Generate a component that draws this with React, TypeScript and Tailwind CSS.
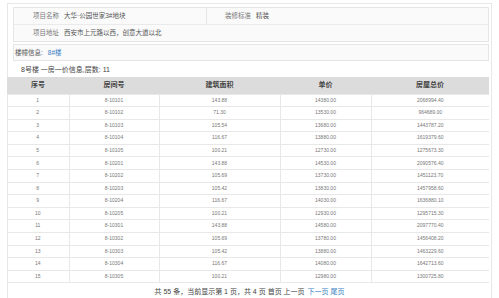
const rows: [string, string, string, string][] = [
  ["8-10101", "143.88", "14380.00", "2068994.40"],
  ["8-10102", "71.30", "13530.00", "964689.00"],
  ["8-10103", "105.54", "13680.00", "1443787.20"],
  ["8-10104", "116.67", "13880.00", "1619379.60"],
  ["8-10105", "100.21", "12730.00", "1275673.30"],
  ["8-10201", "143.88", "14530.00", "2090576.40"],
  ["8-10202", "105.69", "13730.00", "1451123.70"],
  ["8-10203", "105.42", "13830.00", "1457958.60"],
  ["8-10204", "116.67", "14030.00", "1636880.10"],
  ["8-10205", "100.21", "12930.00", "1295715.30"],
  ["8-10301", "143.88", "14580.00", "2097770.40"],
  ["8-10302", "105.69", "13780.00", "1456408.20"],
  ["8-10303", "105.42", "13880.00", "1463229.60"],
  ["8-10304", "116.67", "14080.00", "1642713.60"],
  ["8-10305", "100.21", "12980.00", "1300725.80"],
];

const font = { fontFamily: '"Liberation Sans", "Noto Sans CJK SC", sans-serif' };

export default function App() {
  return (
    <div className="w-[499px] h-[298px] bg-white overflow-hidden pt-[3px] text-[#555]" style={font}>
      <div className="ml-[7px] w-[485px] h-[300px] border border-[#e8e8e8] border-b-0">
        {/* project info */}
        <div className="mt-[3px] ml-[5px] w-[476px] border border-[#e6e6e6] bg-[#fafafa] text-[6.5px]">
          <div className="flex h-[17px] items-center border-b border-[#eaeaea]">
            <div className="w-[48px] text-right pr-[3px] text-[#777]">项目名称</div>
            <div className="w-[145px] pl-[2px] h-full flex items-center border-r border-[#e6e6e6]">大华·公园世家3#地块</div>
            <div className="w-[47px] text-right pr-[3px] text-[#777]">装修标准</div>
            <div className="pl-[2px]">精装</div>
          </div>
          <div className="flex h-[16px] items-center">
            <div className="w-[48px] text-right pr-[3px] text-[#777]">项目地址</div>
            <div className="pl-[2px]">西安市上元路以西，创意大道以北</div>
          </div>
        </div>

        {/* building */}
        <div className="mt-[2px] ml-[5px] w-[476px] h-[17px] border border-[#e6e6e6] bg-[#fafafa] flex items-center pl-[1px] text-[6.5px]">
          <span>楼幢信息:</span>
          <span className="ml-[5px] text-[#3a7fc4]">8#楼</span>
        </div>

        <div className="h-[16px] flex items-center pl-[13px] pt-[2px] text-[7px] text-[#444]">8号楼 一房一价信息,层数: 11</div>

        {/* table */}
        <table className="table-fixed border-collapse w-[482px] -ml-px">
          <colgroup>
            <col className="w-[62px]" />
            <col className="w-[90px]" />
            <col className="w-[121px]" />
            <col className="w-[91px]" />
            <col className="w-[118px]" />
          </colgroup>
          <thead>
            <tr className="h-[17px] bg-[#dcdcdc] text-[7px] font-bold text-[#444]">
              <th>序号</th>
              <th>房间号</th>
              <th>建筑面积</th>
              <th>单价</th>
              <th>房屋总价</th>
            </tr>
          </thead>
          <tbody className="text-[5px] text-[#777]">
            {rows.map((r, i) => (
              <tr key={i} className="h-[12.6px]">
                <td className="text-center border border-[#e8e8e8] border-l-0 p-0">{i + 1}</td>
                {r.map((c, j) => (
                  <td key={j} className={`text-center border border-[#e8e8e8] p-0 ${j === 3 ? "border-r-0" : ""}`}>
                    {c}
                  </td>
                ))}
              </tr>
            ))}
          </tbody>
        </table>

        <div className="h-[14px] pt-[2px] flex items-center justify-center text-[7px] leading-none text-[#444]">
          共 55 条，当前显示第 1 页，共 4 页 首页 上一页 <span className="text-[#3a7fc4] ml-[3px]">下一页 尾页</span>
        </div>
      </div>
    </div>
  );
}
